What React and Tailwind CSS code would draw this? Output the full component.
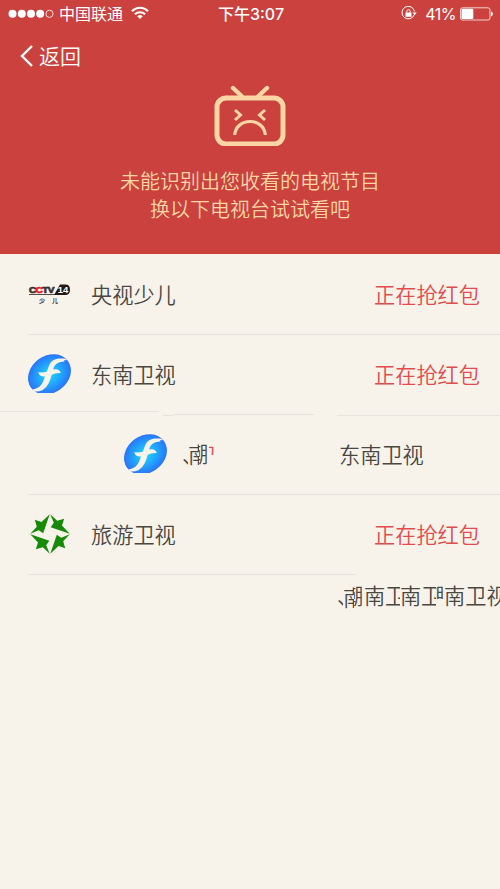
import clsx from "clsx";

function StatusBar() {
    return (
        <div className="h-7 pl-2 pr-[7px] grid grid-cols-[1fr_auto_1fr] items-center text-white text-base leading-[26px]">
            <div className="flex items-center">
                <svg width="46" height="10" viewBox="0 0 46 10" fill="#fff">
                    <circle cx="4.5" cy="4.8" r="4" />
                    <circle cx="13.8" cy="4.8" r="4" />
                    <circle cx="23" cy="4.8" r="4" />
                    <circle cx="32.2" cy="4.8" r="4" />
                    <circle cx="41.5" cy="4.8" r="3.6" fill="none" stroke="#fff" strokeWidth="0.8" />
                </svg>
                <span className="ml-[5px] -mt-0.5">中国联通</span>
                <svg className="ml-2 -mt-0.5" width="18" height="14" viewBox="0 0 18 14" fill="none" stroke="#fff" strokeWidth="2">
                    <path d="M1 5.2A11.2 11.2 0 0 1 17 5.2" />
                    <path d="M3.9 8.3A7.2 7.2 0 0 1 14.1 8.3" />
                    <path d="M9 13L6.2 10.3A4 4 0 0 1 11.8 10.3Z" fill="#fff" stroke="none" />
                </svg>
            </div>
            <div className="font-medium -mt-0.5 pl-px">
                下午<span className="font-[Inter]">3:07</span>
            </div>
            <div className="flex items-center justify-end">
                <svg className="-mt-px" width="16" height="15" viewBox="0 0 16 15" fill="none" stroke="#fff" strokeWidth="1">
                    <path d="M13.2 8.8A6.3 6.3 0 1 1 13.5 5.5" />
                    <path d="M11.4 6.6H15.8L13.6 9.2Z" fill="#fff" stroke="none" />
                    <rect x="4.5" y="6.5" width="6" height="4.2" rx="0.5" fill="#fff" stroke="none" />
                    <path d="M5.8 6.8V5.4A1.7 1.7 0 0 1 9.2 5.4V6.8" />
                </svg>
                <span className="ml-2 font-[Inter] text-base tracking-[-0.5px]">41%</span>
                <svg className="ml-1" width="33" height="14" viewBox="0 0 33 14">
                    <rect x="0.5" y="0.8" width="29.5" height="12.2" rx="2" fill="none" stroke="#fff" strokeOpacity="0.75" />
                    <rect x="1.5" y="1.8" width="11.8" height="10.2" rx="1" fill="#fff" />
                    <path d="M31 4.6Q32.8 5 32.8 7T31 9.4Z" fill="#fff" />
                </svg>
            </div>
        </div>
    );
}

function SadTv() {
    return (
        <svg width="72" height="62" viewBox="0 0 72 62" fill="none" stroke="#fbd6a4">
            <rect x="3" y="14" width="66" height="46" rx="9" strokeWidth="5" />
            <path d="M19 4L27.5 12M53 4L44.5 12" strokeWidth="4.4" strokeLinecap="round" />
            <path d="M21 26L26.5 31L21 36M51 26L45.5 31L51 36" strokeWidth="3" />
            <path d="M20.7 51C22 33 50 33 51.3 51" strokeWidth="3.2" />
        </svg>
    );
}

function CctvLogo() {
    return (
        <svg width="43" height="20" viewBox="0 0 43 20" fontFamily="Liberation Sans" fontWeight="bold">
            <g transform="scale(1.12 1)" fontSize="9" strokeWidth="0.7">
                <text x="0.9" y="9" fill="#3a302e" stroke="#3a302e">C</text>
                <text x="6.7" y="9" fill="#ea1c2c" stroke="#ea1c2c">C</text>
                <text x="12.8" y="9" fill="#3a302e" stroke="#3a302e">T</text>
                <text x="17.6" y="9" fill="#3a302e" stroke="#3a302e">V</text>
            </g>
            <path d="M32 0.5H37.5Q42 0.5 42 5.7T37 11H1V10.2H26.5Z" fill="#231815" />
            <text x="29.8" y="9.2" fontSize="9.5" fill="#fff">14</text>
            <text x="11" y="18.7" fontSize="6" fontFamily="Noto Sans CJK SC" fill="#3a302e">少</text>
            <text x="24" y="18.7" fontSize="6" fontFamily="Noto Sans CJK SC" fill="#3a302e">儿</text>
        </svg>
    );
}

function DongnanLogo() {
    return (
        <svg className="-mt-0.5" width="43" height="39" viewBox="0 0 43 39">
            <defs>
                <radialGradient id="sea" cx="0.5" cy="0.5" r="0.52">
                    <stop offset="0" stopColor="#1cd3ff" />
                    <stop offset="0.4" stopColor="#1fb4fd" />
                    <stop offset="1" stopColor="#2a70fa" />
                </radialGradient>
            </defs>
            <ellipse cx="21.5" cy="20.3" rx="22.8" ry="18.6" transform="rotate(-36 21.5 20.3)" fill="url(#sea)" />
            <path
                d="M37.5 4.8C30 3.6 24.5 5 21.8 10C20.5 12.4 19.8 15 19 17.4C16.2 18.6 13.5 19 10.2 18C10.8 21.2 13 23 16.8 22.2C15.6 28 13 34 4.5 35.6L6 36.2C4.9 36.7 4.6 36.9 7.5 37.5C17.6 37.8 21.4 30 23.6 21C26 19.8 29 18.8 32.8 19.1C31.8 16 29.2 14.8 25.2 15.6C26 11 29 7.6 36.5 7.4L35.7 6.4L38.5 6Z"
                fill="#f8f4ea"
            />
        </svg>
    );
}

function TravelLogo() {
    const star = "M19.7 0.3L13.2 19.3L8.7 16.2L0.3 19.7L6.8 12.8L4.8 5.8L11.5 8Z";

    return (
        <svg className="ml-[1.5px]" width="40" height="40" viewBox="0 0 40 40" fill="#178a08">
            <path d={star} />
            <path d={star} transform="rotate(90 20 20)" />
            <path d={star} transform="rotate(180 20 20)" />
            <path d={star} transform="rotate(270 20 20)" />
        </svg>
    );
}

// slice of a glyph: w is the visible width, skip is what is cut off on the left
function Slice({ char, w, skip = 0, className }) {
    return (
        <span className={clsx("block shrink-0 overflow-hidden whitespace-nowrap", className)} style={{ width: w }}>
            <span className="block" style={{ marginLeft: -skip }}>{char}</span>
        </span>
    );
}

function Row({ logo, name }) {
    return (
        <li className="h-20 flex">
            <div className="w-[91px] pl-7 flex items-center">{logo}</div>
            <div className="flex-1 flex items-center justify-between pr-5">
                <span>{name}</span>
                <span className="text-[#e24c4c]">正在抢红包</span>
            </div>
        </li>
    );
}

function Line({ className }) {
    return <div className={clsx("h-px bg-[#e6e4df]", className)} />;
}

export default function App() {
    return (
        <div className="w-[500px] h-[889px] overflow-hidden bg-[#f7f3eb] font-['Noto_Sans_CJK_SC',sans-serif]">
            <header className="h-[254px] bg-[#ca413e]">
                <StatusBar />
                <div className="h-14 pl-5 flex items-center text-white text-[21px] font-[350]">
                    <svg width="13" height="22" viewBox="0 0 13 22" fill="none" stroke="#fff" strokeWidth="2.4">
                        <path d="M12 1L2 11L12 21" />
                    </svg>
                    <span className="ml-1.5 -mt-px">返回</span>
                </div>
                <div className="flex flex-col items-center">
                    <SadTv />
                    <p className="mt-[21px] text-center text-xl leading-7 font-[350] text-[#fbd6a4]">
                        未能识别出您收看的电视节目
                        <br />
                        换以下电视台试试看吧
                    </p>
                </div>
            </header>

            <ul className="text-[21.2px] leading-8 font-[350] text-[#4a4743]">
                <Row logo={<CctvLogo />} name="央视少儿" />
                <Line className="ml-7 -mb-px" />
                <Row logo={<DongnanLogo />} name="东南卫视" />
                <div className="h-1 -mt-[3px] -mb-px flex items-start">
                    <Line className="w-[159px]" />
                    <Line className="w-[11px] ml-1 mt-1" />
                    <Line className="w-[140px] mt-[3px]" />
                    <Line className="flex-1 ml-[23px] mt-1" />
                </div>
                <li className="h-20 pl-[124px] flex items-center">
                    <DongnanLogo />
                    <div className="ml-[15px] w-[157px] flex items-center">
                        <Slice char="、" w={6} />
                        <Slice char="南" w={11} />
                        <Slice char="潮" w={10} skip={12} className="-mt-0.5" />
                        <Slice char="包" w={5} skip={14} className="h-3.5 -mt-3 text-[#e24c4c] leading-6" />
                    </div>
                    <span>东南卫视</span>
                </li>
                <Line className="ml-7 -mb-px" />
                <Row logo={<TravelLogo />} name="旅游卫视" />
                <Line className="ml-7 -mb-px w-[328px]" />
                <li className="h-[42px] pl-[337px] flex items-center">
                    <Slice char="、" w={6} />
                    <Slice char="南" w={11} className="mt-1" />
                    <Slice char="潮" w={10} skip={12} />
                    <Slice char="南" w={21} />
                    <Slice char="卫" w={15} />
                    <Slice char="南" w={21} />
                    <Slice char="卫" w={15} />
                    <Slice char="潮" w={8} skip={13} className="h-5 self-start mt-[5px]" />
                    <Slice char="南卫视" w={57} />
                </li>
            </ul>
        </div>
    );
}
